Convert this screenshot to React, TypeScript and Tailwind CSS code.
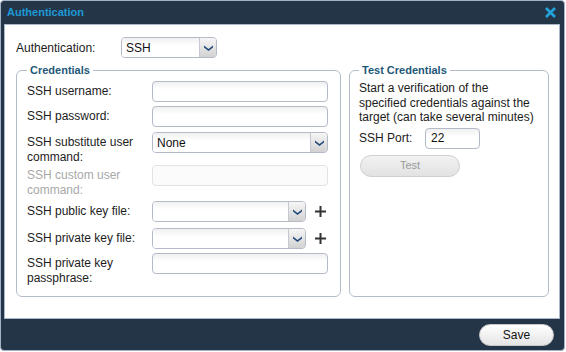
import React from "react";

const font = { fontFamily: '"Liberation Sans", Arial, sans-serif' };

function Chevron() {
  return (
    <svg width="9" height="6" viewBox="0 0 9 6" className="block">
      <path d="M0 0.5 L4.5 4 L9 0.5 L9 2.5 L4.5 6 L0 2.5 Z" fill="#234a7e" />
    </svg>
  );
}

function TextBox({ className = "", disabled = false, value = "" }: { className?: string; disabled?: boolean; value?: string }) {
  return (
    <div
      className={`h-[21px] rounded-[4px] border flex items-center pl-[5px] text-[12px] text-[#111] ${
        disabled
          ? "border-[#e0e2e7] bg-[#fbfbfb]"
          : "border-[#b4bac8] bg-linear-to-b from-[#f0f0f0] to-white to-40%"
      } ${className}`}
    >
      {value}
    </div>
  );
}

function Select({ className = "", value = "" }: { className?: string; value?: string }) {
  return (
    <div className={`h-[21px] rounded-[4px] border border-[#b4bac8] flex overflow-hidden ${className}`}>
      <div className="flex-1 flex items-center pl-[4px] text-[12px] text-[#111] bg-linear-to-b from-[#f0f0f0] to-white to-40%">
        {value}
      </div>
      <div className="w-[17px] border-l border-[#c4c8d0] bg-linear-to-b from-[#f6f6f6] to-[#d2d2d2] flex items-center justify-center">
        <Chevron />
      </div>
    </div>
  );
}

function Plus() {
  return (
    <svg width="11" height="11" viewBox="0 0 11 11" className="block">
      <path d="M5.5 0 V11 M0 5.5 H11" stroke="#333" strokeWidth="2" />
    </svg>
  );
}

function Row({ h, label, disabled = false, children }: { h: string; label: React.ReactNode; disabled?: boolean; children: React.ReactNode }) {
  return (
    <div className={`flex items-start ${h}`}>
      <div className={`w-[125px] pt-[3px] leading-[15px] ${disabled ? "text-[#a8a8a8]" : "text-[#1c1c1c]"}`}>{label}</div>
      {children}
    </div>
  );
}

export default function App() {
  return (
    <div className="w-[566px] h-[352px] bg-white text-[12px]" style={font}>
      <div className="w-[565px] h-[351px] flex flex-col bg-[#243548] border border-[#a2b2c8] rounded-[4px]">
        <div className="h-[23px] flex items-center justify-between pl-[6px] pr-[8px]">
          <div className="text-[11px] font-bold text-[#1d9ad6]">Authentication</div>
          <svg width="11" height="11" viewBox="0 0 11 11" className="block">
            <path d="M1 1 L10 10 M10 1 L1 10" stroke="#23a3dc" strokeWidth="2.6" />
          </svg>
        </div>

        <div className="ml-[3px] mr-[4px] h-[295px] bg-white border border-[#a9b8cc] pt-[12px] pl-[11px]">
          <div className="flex items-center">
            <div className="w-[105px] text-[#1c1c1c]">Authentication:</div>
            <Select className="w-[96px]" value="SSH" />
          </div>

          <div className="flex gap-[8px] mt-[5px]">
            <fieldset className="w-[325px] h-[234px] border border-[#b4bccb] rounded-[6px] pl-[10px] pt-[4px]">
              <legend className="px-[3px] text-[11px] leading-[14px] font-bold text-[#1e5878]">Credentials</legend>
              <Row h="h-[25px]" label="SSH username:">
                <TextBox className="w-[176px]" />
              </Row>
              <Row h="h-[26px]" label="SSH password:">
                <TextBox className="w-[176px]" />
              </Row>
              <Row h="h-[33px]" label={<>SSH substitute user<br />command:</>}>
                <Select className="w-[176px]" value="None" />
              </Row>
              <Row h="h-[36px]" disabled label={<>SSH custom user<br />command:</>}>
                <TextBox className="w-[176px]" disabled />
              </Row>
              <Row h="h-[27px]" label="SSH public key file:">
                <Select className="w-[154px]" />
                <div className="pt-[5px] pl-[9px]">
                  <Plus />
                </div>
              </Row>
              <Row h="h-[25px]" label="SSH private key file:">
                <Select className="w-[154px]" />
                <div className="pt-[5px] pl-[9px]">
                  <Plus />
                </div>
              </Row>
              <Row h="h-[36px]" label={<>SSH private key<br />passphrase:</>}>
                <TextBox className="w-[176px]" />
              </Row>
            </fieldset>

            <fieldset className="w-[200px] h-[234px] border border-[#b4bccb] rounded-[6px] pl-[9px] pr-[11px] pt-[4px]">
              <legend className="px-[3px] text-[11px] leading-[14px] font-bold text-[#1e5878]">Test Credentials</legend>
              <div className="leading-[14.5px] text-[#1c1c1c]">
                Start a verification of the specified credentials against the target (can take several minutes)
              </div>
              <div className="flex items-center mt-[3px]">
                <div className="w-[66px] text-[#1c1c1c]">SSH Port:</div>
                <TextBox className="w-[55px]" value="22" />
              </div>
              <div className="mt-[6px] ml-[1px] w-[100px] h-[22px] rounded-full border border-[#cfcfcf] bg-linear-to-b from-[#f2f2f2] to-[#e2e2e2] flex items-center justify-center text-[11px] text-[#9a9a9a]">
                Test
              </div>
            </fieldset>
          </div>
        </div>

        <div className="flex-1 flex items-center justify-end pr-[10px]">
          <div className="w-[75px] h-[22px] rounded-full border border-[#c8c8c8] bg-linear-to-b from-white to-[#e4e4e4] flex items-center justify-center text-[12px] text-[#111]">
            Save
          </div>
        </div>
      </div>
    </div>
  );
}
